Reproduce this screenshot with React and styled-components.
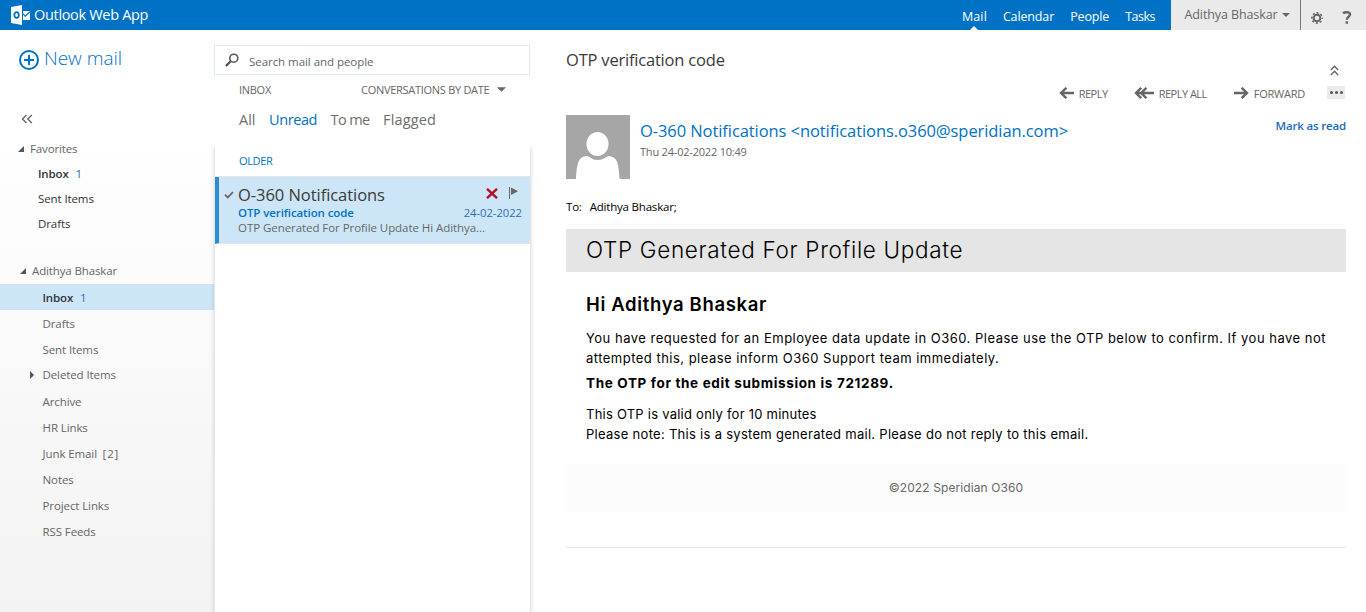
import React from "react";
import styled, { createGlobalStyle } from "styled-components";

const GlobalStyle = createGlobalStyle`
  * { box-sizing: border-box; }
  html, body { margin: 0; padding: 0; overflow: hidden; background: #fff; }
  body { font-family: "Open Sans", "Noto Sans", sans-serif; font-size: 11.5px; color: #666; }
`;

const Page = styled.div`
  width: 1366px;
  height: 612px;
  display: flex;
  flex-direction: column;
  overflow: hidden;
`;

/* ---------- top bar ---------- */
const TopBar = styled.header`
  height: 30px;
  flex: none;
  display: flex;
  background: #0072c6;
  color: #fff;
`;

const Brand = styled.div`
  display: flex;
  align-items: center;
  gap: 4px;
  padding-left: 11px;
  flex: 1;
  font-size: 14.5px;
  line-height: 30px;
  letter-spacing: -0.32px;
  white-space: nowrap;
`;

const Nav = styled.nav`
  display: flex;
  gap: 16px;
  padding-right: 16px;
`;

const NavLink = styled.a`
  position: relative;
  font-size: 12.5px;
  line-height: 33px;
  letter-spacing: ${(p) => p.$track ?? -0.14}px;
  white-space: nowrap;
`;

const NavPointer = styled.span`
  position: absolute;
  left: 50%;
  bottom: 0;
  margin-left: -4px;
  border: 4px solid transparent;
  border-top: 0;
  border-bottom: 4px solid #fff;
`;

const Account = styled.div`
  width: 130px;
  display: flex;
  align-items: center;
  gap: 4px;
  padding: 0 0 1px 13.5px;
  background: #eaeaea;
  border-right: 1px solid #777;
  color: #666;
  font-size: 12.5px;
  letter-spacing: -0.1px;
  white-space: nowrap;
`;

const Tools = styled.div`
  width: 65px;
  display: flex;
  align-items: center;
  gap: 19px;
  padding: 5px 0 0 10px;
  background: #eaeaea;
`;

/* ---------- body ---------- */
const Body = styled.div`
  flex: 1;
  display: flex;
  min-height: 0;
`;

const Sidebar = styled.aside`
  width: 214px;
  flex: none;
  background: linear-gradient(#fff 90px, #fcfcfc 220px, #f3f3f3 570px);
`;

const NewMail = styled.div`
  display: flex;
  align-items: center;
  gap: 5px;
  height: 60px;
  padding-left: 19px;
  color: #0072c6;
  font-size: 19px;
  font-weight: 300;
  letter-spacing: -0.02px;
`;

const NewMailLabel = styled.span`
  padding-bottom: 4px;
`;

const Collapse = styled.div`
  height: 46px;
  padding: 22px 0 0 21px;
`;

const FolderHead = styled.div`
  display: flex;
  align-items: center;
  gap: 6px;
  height: 25px;
  margin-bottom: ${(p) => p.$after || 0}px;
  padding-left: ${(p) => p.$indent}px;
  letter-spacing: -0.13px;
`;

const Folder = styled.div`
  display: flex;
  align-items: center;
  height: ${(p) => p.$height}px;
  padding: 0 0 ${(p) => (p.$raised ? 2 : 0)}px ${(p) => p.$indent}px;
  background: ${(p) => (p.$selected ? "#cde6f7" : "none")};
  color: ${(p) => (p.$dark ? "#333" : "#666")};
  font-weight: ${(p) => (p.$unread ? 600 : 400)};
  letter-spacing: ${(p) => (p.$unread ? "-0.15px" : "-0.1px")};
  white-space: nowrap;
`;

const Count = styled.span`
  margin-left: ${(p) => (p.$plain ? 5.5 : 7)}px;
  color: ${(p) => (p.$plain ? "#666" : "#2a6fb5")};
  font-weight: 400;
  letter-spacing: ${(p) => (p.$plain ? 0.9 : 0)}px;
`;

const FolderGroup = styled.div`
  padding-bottom: ${(p) => p.$gap || 0}px;
`;

const Twisty = styled.span`
  display: flex;
  width: 16px;
  margin-left: -14px;
  margin-right: -2px;
  padding-top: 2px;
`;

/* ---------- message list ---------- */
const ListColumn = styled.section`
  width: 316px;
  flex: none;
  display: flex;
  flex-direction: column;
`;

const Search = styled.div`
  display: flex;
  align-items: center;
  gap: 10px;
  height: 30px;
  margin-top: 15px;
  padding-left: 10px;
  border: 1px solid #dcebf6;
  letter-spacing: -0.05px;
`;

const SearchLabel = styled.span`
  padding-top: 2px;
`;

const ListHeading = styled.div`
  display: flex;
  align-items: center;
  height: 29px;
  padding-left: 25px;
  font-size: 11px;
  letter-spacing: -0.28px;
`;

const SortBy = styled.span`
  display: flex;
  align-items: center;
  gap: 8px;
  margin-left: 90px;
`;

const Filters = styled.div`
  display: flex;
  gap: 13.5px;
  height: 39px;
  padding-left: 25px;
  font-size: 14.5px;
  line-height: 32px;
`;

const Filter = styled.span`
  color: ${(p) => (p.$active ? "#0072c6" : "#6e6e6e")};
  letter-spacing: ${(p) => p.$track || 0}px;
`;

const ListPanel = styled.div`
  flex: 1;
  margin-left: 1px;
  background: #fff;
  box-shadow: 0 4px 5px rgba(0, 0, 0, 0.22);
  clip-path: inset(0 -8px 0 -8px);
`;

const GroupTitle = styled.div`
  height: 34px;
  padding-left: 24px;
  border-bottom: 1px solid #e4e4e4;
  color: #0072c6;
  font-size: 11px;
  line-height: 36px;
  letter-spacing: -0.35px;
`;

const Message = styled.article`
  display: flex;
  flex-direction: column;
  height: 67px;
  padding: 7px 8px 0 5px;
  border-left: 4px solid #2a8dd4;
  border-bottom: 1px solid #dbe7f0;
  background: #cde6f7;
`;

const MessageTop = styled.div`
  display: flex;
  align-items: center;
  height: 21px;
`;

const Sender = styled.span`
  flex: 1;
  margin-left: 4px;
  color: #3a3a3a;
  font-size: 16.5px;
  letter-spacing: -0.05px;
`;

const MessageActions = styled.span`
  display: flex;
  align-items: center;
  gap: 11px;
  padding: 0 4px 3px 0;
`;

const MessageLine = styled.div`
  display: flex;
  justify-content: space-between;
  height: 15px;
  padding-left: 14px;
  line-height: 15px;
  letter-spacing: ${(p) => p.$track}px;
  white-space: nowrap;
`;

const MessageSubject = styled.span`
  color: #0072c6;
  font-weight: 600;
`;

const MessageDate = styled.span`
  color: #2a6fb5;
  font-size: 11.2px;
  letter-spacing: 0;
`;

/* ---------- reading pane ---------- */
const Reading = styled.main`
  flex: 1;
  padding: 0 20px 0 36px;
`;

const SubjectRow = styled.div`
  display: flex;
  justify-content: space-between;
  height: 49px;
  padding-top: 19px;
  color: #3a3a3a;
  font-size: 16.5px;
  line-height: 22px;
  letter-spacing: -0.2px;
`;

const CollapseUp = styled.span`
  padding: 10px 7px 0 0;
`;

const Actions = styled.div`
  display: flex;
  justify-content: flex-end;
  align-items: center;
  height: 29px;
  padding: 0 1px 1px 0;
  gap: 26px;
  font-size: 11px;
`;

const Action = styled.span`
  display: flex;
  align-items: center;
  gap: 5px;
  margin-right: ${(p) => p.$after || 0}px;
  letter-spacing: ${(p) => p.$track}px;
  white-space: nowrap;
`;

const More = styled.span`
  display: flex;
  align-items: center;
  justify-content: center;
  gap: 2px;
  width: 18px;
  height: 13px;
  margin: -1px 0 0 -4px;
  background: #eaeaea;
`;

const Dot = styled.i`
  width: 3px;
  height: 3px;
  border-radius: 50%;
  background: #555;
`;

const SenderRow = styled.div`
  display: flex;
  height: 84px;
  padding-top: 7px;
`;

const SenderInfo = styled.div`
  flex: 1;
  padding: 4px 0 0 10px;
`;

const SenderName = styled.div`
  color: #0072c6;
  font-size: 16.5px;
  line-height: 24px;
  letter-spacing: -0.08px;
  white-space: nowrap;
`;

const Sent = styled.div`
  font-size: 11px;
  line-height: 18px;
  letter-spacing: -0.2px;
`;

const MarkRead = styled.span`
  color: #1a6cbd;
  font-weight: 600;
  line-height: 22px;
  letter-spacing: -0.17px;
`;

const Recipients = styled.div`
  display: flex;
  gap: 8px;
  height: 37px;
  color: #000;
  line-height: 30px;
  letter-spacing: -0.2px;
`;

const MailBody = styled.div`
  font-family: Inter, "Open Sans", sans-serif;
  color: #000;
`;

const Banner = styled.div`
  height: 43px;
  padding-left: 20px;
  background: #e5e5e5;
  font-size: 22.5px;
  font-weight: 300;
  line-height: 42px;
  letter-spacing: 0.68px;
`;

const Content = styled.div`
  height: 192px;
  padding: 20px 20px 0;
  font-size: 13px;
  line-height: 20px;
`;

const Greeting = styled.div`
  font-size: 18.5px;
  font-weight: 600;
  line-height: 24px;
  letter-spacing: 0.65px;
  margin-bottom: 12px;
`;

const Paragraph = styled.p`
  margin: 0;
  text-align: justify;
  letter-spacing: ${(p) => p.$track || 0}px;
`;

const Code = styled.p`
  margin: 5px 0 11px;
  font-size: 13.5px;
  font-weight: 700;
  letter-spacing: 0.65px;
`;

const Footer = styled.div`
  height: 48px;
  background: #fcfcfc;
  color: #666;
  font-size: 12px;
  line-height: 48px;
  letter-spacing: 0.1px;
  text-align: center;
`;

const Divider = styled.hr`
  margin: 35px 0 0;
  border: 0;
  border-top: 1px solid #e4e4e4;
`;

/* ---------- drawings ---------- */
const OutlookLogo = () => (
  <svg width="19" height="20" viewBox="0 0 19 20">
    <path d="M0 2 11 0v20L0 18z" fill="#fff" />
    <ellipse cx="5.6" cy="10" rx="2.2" ry="2.9" fill="none" stroke="#0072c6" strokeWidth="1.7" />
    <path d="M12 6h7v9h-7z" fill="#fff" />
    <path d="M12 8.5l2.2 2.8L19 6.8" fill="none" stroke="#0072c6" strokeWidth="1.2" />
  </svg>
);

const PlusCircle = () => (
  <svg width="20" height="20" viewBox="0 0 20 20" fill="none" stroke="#0072c6" strokeWidth="2">
    <circle cx="10" cy="10" r="9" />
    <path d="M10 5v10M5 10h10" />
  </svg>
);

const Chevrons = ({ up }) => (
  <svg width={up ? 9 : 12} height={up ? 11 : 10} viewBox={up ? "0 0 9 11" : "0 0 12 10"} fill="none" stroke="#666" strokeWidth="1.4">
    {up ? <path d="M.8 5 4.5 1.3 8.2 5M.8 10 4.5 6.3 8.2 10" /> : <path d="M5.5 1 1.5 5l4 4M10.8 1l-4 4 4 4" />}
  </svg>
);

const Caret = ({ width = 8, height = 4 }) => (
  <svg width={width} height={height} viewBox="0 0 8 4">
    <path d="M0 0h8L4 4z" fill="#666" />
  </svg>
);

const OpenTwisty = () => (
  <svg width="6" height="6" viewBox="0 0 6 6">
    <path d="M6 0v6H0z" fill="#555" />
  </svg>
);

const ClosedTwisty = () => (
  <svg width="5" height="8" viewBox="0 0 5 8">
    <path d="M1 0 5 4 1 8z" fill="#555" />
  </svg>
);

const Gear = () => (
  <svg width="12" height="12" viewBox="0 0 12 12" fill="none" stroke="#666">
    <circle cx="6" cy="6" r="3.3" strokeWidth="1.9" />
    <circle cx="6" cy="6" r="5.1" strokeWidth="1.6" strokeDasharray="2 2.005" strokeDashoffset="1" />
  </svg>
);

const Help = () => (
  <svg width="10" height="13" viewBox="0 0 10 13" fill="none" stroke="#666" strokeWidth="2.4">
    <path d="M1 2.4C2.5 1 8 .4 8 3.6 8 5.8 4.8 5.8 4.8 8.8" />
    <path d="M4.8 10.3v2.4" strokeWidth="2.6" />
  </svg>
);

const SearchIcon = () => (
  <svg width="14" height="14" viewBox="0 0 14 14" fill="none" stroke="#555">
    <circle cx="8.8" cy="5.2" r="4" strokeWidth="1.6" />
    <path d="M5.8 8.2.9 13" strokeWidth="2.4" />
  </svg>
);

const Check = () => (
  <svg width="10" height="8" viewBox="0 0 10 8" fill="none" stroke="#666" strokeWidth="1.8">
    <path d="M1 3.6 3.8 6.4 9 1" />
  </svg>
);

const Cross = () => (
  <svg width="12" height="11" viewBox="0 0 12 11" stroke="#b1102b" strokeWidth="2.4">
    <path d="M1 .8 11 10.2M11 .8 1 10.2" />
  </svg>
);

const Flag = () => (
  <svg width="9" height="12" viewBox="0 0 9 12">
    <path d="M.5 0v12" stroke="#666" />
    <path d="M2 .5 9 4.2 2 8z" fill="#666" />
  </svg>
);

const Arrow = ({ kind }) => (
  <svg width={kind === "all" ? 20 : 15} height="12" viewBox={kind === "all" ? "0 0 20 12" : "0 0 15 12"} fill="none" stroke="#666" strokeWidth="2.4">
    {kind === "reply" && <path d="M15 6H2M7.4 .8 2 6l5.4 5.2" />}
    {kind === "all" && <path d="M20 6H2M7.2 .8 2 6l5.2 5.2M12.4 .8 7.2 6l5.2 5.2" />}
    {kind === "forward" && <path d="M0 6h13M7.6 .8 13 6l-5.4 5.2" />}
  </svg>
);

const Avatar = () => (
  <svg width="64" height="64" viewBox="0 0 64 64">
    <path d="M0 0h64v64H0z" fill="#a6a6a6" />
    <ellipse cx="31.5" cy="29" rx="11" ry="12" fill="#fff" />
    <path d="M10 64C11 48 12 42 21 41c3 0 4 4 10.500 4S40 41 43 41c9 1 9.500 8 10.500 23z" fill="#fff" />
  </svg>
);

const favorites = [
  { name: "Inbox", count: "1" },
  { name: "Sent Items" },
  { name: "Drafts" },
];

const folders = [
  { name: "Inbox", count: "1", selected: true },
  { name: "Drafts" },
  { name: "Sent Items" },
  { name: "Deleted Items", closed: true },
  { name: "Archive" },
  { name: "HR Links" },
  { name: "Junk Email", total: "[2]" },
  { name: "Notes" },
  { name: "Project Links" },
  { name: "RSS Feeds" },
];

export default function App() {
  return (
    <Page>
      <GlobalStyle />
      <TopBar>
        <Brand>
          <OutlookLogo />
          <span>Outlook Web App</span>
        </Brand>
        <Nav>
          <NavLink $track={0.1}>Mail<NavPointer /></NavLink>
          <NavLink>Calendar</NavLink>
          <NavLink>People</NavLink>
          <NavLink $track={-0.5}>Tasks</NavLink>
        </Nav>
        <Account>Adithya Bhaskar<Caret /></Account>
        <Tools><Gear /><Help /></Tools>
      </TopBar>
      <Body>
        <Sidebar>
          <NewMail><PlusCircle /><NewMailLabel>New mail</NewMailLabel></NewMail>
          <Collapse><Chevrons /></Collapse>
          <FolderGroup $gap={22}>
            <FolderHead $indent={18}><OpenTwisty />Favorites</FolderHead>
            {favorites.map((f) => (
              <Folder key={f.name} $height={25} $indent={38} $dark $unread={!!f.count}>
                {f.name}{f.count && <Count>{f.count}</Count>}
              </Folder>
            ))}
          </FolderGroup>
          <FolderGroup>
            <FolderHead $indent={20} $after={1}><OpenTwisty />Adithya Bhaskar</FolderHead>
            {folders.map((f) => (
              <Folder
                key={f.name}
                $height={26}
                $indent={42.5}
                $dark={f.selected}
                $unread={!!f.count}
                $selected={f.selected}
                $raised={f.closed}
              >
                {f.closed && <Twisty><ClosedTwisty /></Twisty>}
                {f.name}
                {f.count && <Count>{f.count}</Count>}
                {f.total && <Count $plain>{f.total}</Count>}
              </Folder>
            ))}
          </FolderGroup>
        </Sidebar>
        <ListColumn>
          <Search><SearchIcon /><SearchLabel>Search mail and people</SearchLabel></Search>
          <ListHeading>
            <span>INBOX</span>
            <SortBy>CONVERSATIONS BY DATE<Caret width={9} height={5} /></SortBy>
          </ListHeading>
          <Filters>
            <Filter>All</Filter>
            <Filter $active $track={-0.4}>Unread</Filter>
            <Filter $track={-0.6}>To me</Filter>
            <Filter $track={0.15}>Flagged</Filter>
          </Filters>
          <ListPanel>
            <GroupTitle>OLDER</GroupTitle>
            <Message>
              <MessageTop>
                <Check />
                <Sender>O-360 Notifications</Sender>
                <MessageActions><Cross /><Flag /></MessageActions>
              </MessageTop>
              <MessageLine $track={-0.1}>
                <MessageSubject>OTP verification code</MessageSubject>
                <MessageDate>24-02-2022</MessageDate>
              </MessageLine>
              <MessageLine $track={-0.06}>OTP Generated For Profile Update Hi Adithya...</MessageLine>
            </Message>
          </ListPanel>
        </ListColumn>
        <Reading>
          <SubjectRow>
            <span>OTP verification code</span>
            <CollapseUp><Chevrons up /></CollapseUp>
          </SubjectRow>
          <Actions>
            <Action $track={-0.5}><Arrow kind="reply" />REPLY</Action>
            <Action $track={-0.5} $after={1}><Arrow kind="all" />REPLY ALL</Action>
            <Action $track={-0.25}><Arrow kind="forward" />FORWARD</Action>
            <More><Dot /><Dot /><Dot /></More>
          </Actions>
          <SenderRow>
            <Avatar />
            <SenderInfo>
              <SenderName>O-360 Notifications &lt;notifications.o360@speridian.com&gt;</SenderName>
              <Sent>Thu 24-02-2022 10:49</Sent>
            </SenderInfo>
            <MarkRead>Mark as read</MarkRead>
          </SenderRow>
          <Recipients><span>To:</span><span>Adithya Bhaskar;</span></Recipients>
          <MailBody>
            <Banner>OTP Generated For Profile Update</Banner>
            <Content>
              <Greeting>Hi Adithya Bhaskar</Greeting>
              <Paragraph $track={0.48}>
                You have requested for an Employee data update in O360. Please use the OTP below to confirm. If you have not
                attempted this, please inform O360 Support team immediately.
              </Paragraph>
              <Code>The OTP for the edit submission is 721289.</Code>
              <Paragraph $track={0.24}>This OTP is valid only for 10 minutes</Paragraph>
              <Paragraph $track={0.29}>Please note: This is a system generated mail. Please do not reply to this email.</Paragraph>
            </Content>
            <Footer>©2022 Speridian O360</Footer>
          </MailBody>
          <Divider />
        </Reading>
      </Body>
    </Page>
  );
}
